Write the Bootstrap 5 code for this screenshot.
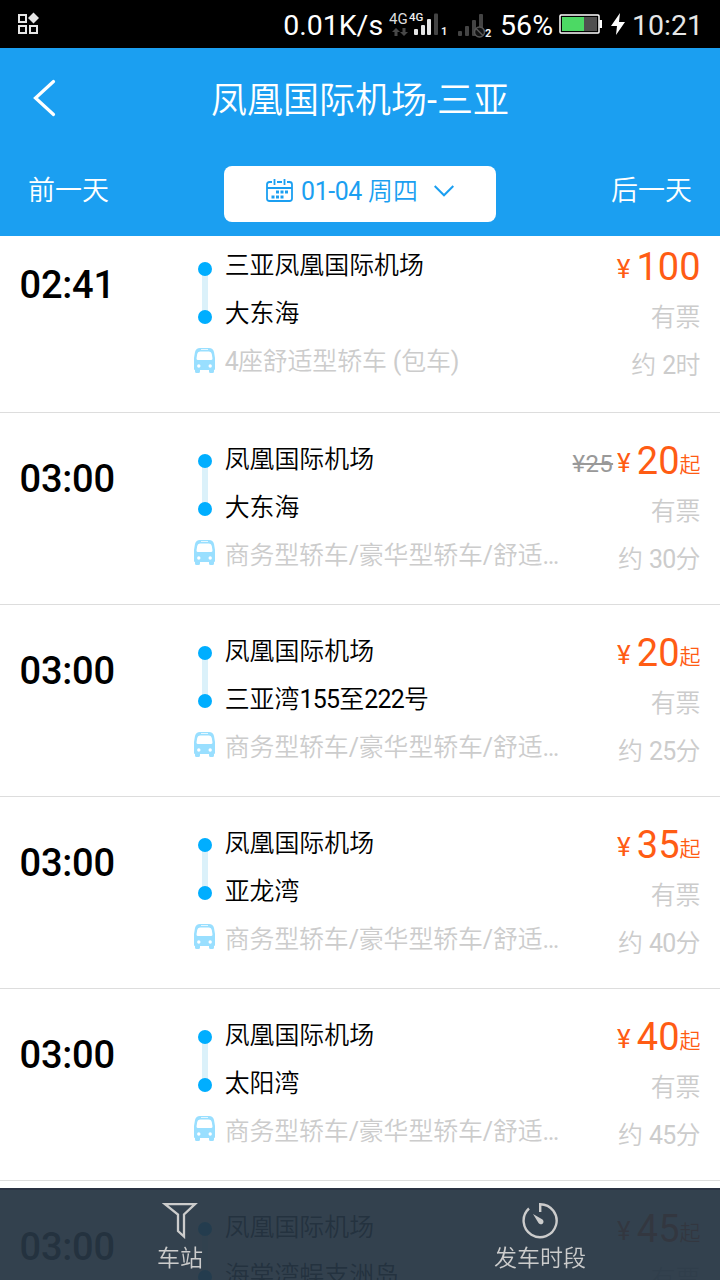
<!DOCTYPE html>
<html lang="zh-CN">
<head>
<meta charset="utf-8">
<meta name="viewport" content="width=device-width, initial-scale=1">
<title>凤凰国际机场-三亚</title>
<link rel="stylesheet" href="https://cdn.jsdelivr.net/npm/bootstrap@5.3.0/dist/css/bootstrap.min.css">
<style>
html,body{height:1280px;overflow:hidden}
body{font-family:Roboto,"Noto Sans CJK SC DemiLight","Noto Sans CJK SC",sans-serif;font-size:24.9px;color:#000;background:#fff}
svg{display:block;flex:none}
.statusbar{height:48px;background:#000;color:#fff;font-size:28.500px;line-height:48px;padding:3px 17px 0 17px}
.app-head{height:188px;background:#1b9ff1;color:#fff}
.title-line{height:100px;font-size:36px;padding-top:5px}
.back-btn{left:32px;top:31px}
.day-line{height:88px;padding:18px 28px 0}
.day-link{font-size:27px;line-height:48px;padding-top:1px}
.date-btn{width:272px;height:56px;border-radius:8px;background:#fff;color:#1b9ff1;padding:0 0 6px;border:0;gap:8px}
.date-btn>span{padding-top:2px}
.date-btn .digits{letter-spacing:-.4px}
.trip{height:192px;padding-top:22px;border-bottom:1px solid #ddd;line-height:48px}
.trip.first-trip{height:177px;padding-top:5px}
.depart{width:193px;padding-left:19.500px;font-size:38px;font-weight:500;line-height:48px;margin-top:20px;letter-spacing:-.2px}
.rail{width:24px;margin-top:18px}
.first-trip .rail{margin-top:20px}
.stops{width:345px;padding-left:7.700px;padding-top:1px;white-space:nowrap}
.stops>div{position:static;height:48px}
.digits{letter-spacing:-.7px}
.muted-text{color:#ccc}
.type-line{letter-spacing:-.1px}
.fare{padding-right:19.500px;margin-top:4px}
.fare-line{height:48.500px;color:#ff5c14;white-space:nowrap;line-height:44px}
.fare-line .cur{font-size:26px;margin-right:6px;vertical-align:2px}
.fare-line .num{font-size:38px}
.fare-line .from{font-size:21px;vertical-align:2px}
.fare-line .old{font-size:24px;color:#999;margin-right:4px;letter-spacing:.3px;vertical-align:2px}
.tools{height:92px;background:rgba(38,53,67,.94);border-top:2px solid #2b3343;color:#ccc;font-size:23px;line-height:34px}
.tools svg{margin-top:11px;margin-bottom:3px}
</style>
</head>
<body class="d-flex flex-column">
<svg width="0" height="0" class="position-absolute">
<defs>
<g id="rail">
<rect x="9" y="8" width="6" height="48" fill="#dbf1fa"/>
<circle cx="12" cy="8" r="7" fill="#00aeff"/><circle cx="12" cy="56" r="7" fill="#00aeff"/>
<g transform="translate(1 87)">
<path fill="#99dfff" fill-rule="evenodd" d="M6 0h9q4 0 5 4l1 6v11q0 1-1 1v1.500q0 1.500-1.500 1.500h-2q-1.500 0-1.500-1.500V22H6v1.500Q6 25 4.500 25h-2Q1 25 1 23.500V22q-1 0-1-1V10l1-6q1-4 5-4zM7 1.200v.8h7v-.8zM6 3.500Q3.600 3.500 3.200 6L2.500 10.500q0 1.500 1.500 1.500h13q1.500 0 1.500-1.500l-.7-4.500Q17.400 3.500 15 3.500zM4.800 16.300a1.700 1.700 0 1 0 0 3.400 1.700 1.700 0 0 0 0-3.400zm11.400 0a1.700 1.700 0 1 0 0 3.400 1.700 1.700 0 0 0 0-3.400z"/>
</g>
</g>
</defs>
</svg>

<div class="statusbar d-flex align-items-center flex-shrink-0">
<svg width="24" height="24" viewBox="0 0 24 24" style="margin-top:-3px" fill="none" stroke="#e6e6e6" stroke-width="2"><path d="M2 3h7v7H2zM2 14h7v7H2zM13 14h7v7h-7z"/><path fill="#e6e6e6" stroke="none" d="M16.500.5l5.500 5.500-5.500 5.500L11 6z"/></svg>
<span class="ms-auto">0.01K/s</span>
<svg width="111" height="46" viewBox="0 0 111 46" style="margin:-4px 0 0 6px" font-family="Roboto">
<text x="0" y="23" font-size="15" fill="#ddd">4G</text>
<path fill="#484848" d="M7 27l4 4H8.500v4h-3v-4H3zM15 35l-4-4h2.500v-4h3v4H19z"/>
<text x="20" y="20" font-size="11.500" font-weight="500" fill="#eee">4G</text>
<g fill="#e6e6e6"><rect x="25" y="28" width="4" height="6" rx="1"/><rect x="32" y="24" width="4" height="10" rx="1"/><rect x="38" y="18" width="4" height="16" rx="1"/></g>
<rect x="45" y="12.500" width="4" height="21.500" rx="1" fill="#444"/>
<text x="52" y="34" font-size="11" font-weight="700" fill="#eee">1</text>
<g fill="#444"><rect x="69" y="30" width="4" height="5" rx="1"/><rect x="76" y="25" width="4" height="10" rx="1"/><rect x="83" y="19" width="4" height="16" rx="1"/><rect x="90" y="13" width="4" height="22" rx="1"/></g>
<circle cx="90.500" cy="31" r="5" fill="#111" stroke="#555" stroke-width="1.500"/><path d="M87 27.500l7 7" stroke="#555" stroke-width="1.500"/>
<text x="96" y="36" font-size="11" font-weight="700" fill="#eee">2</text>
</svg>
<span>56%</span>
<svg width="43" height="20" viewBox="0 0 43 20" style="margin:-4px 0 0 6px"><rect x="1" y="1" width="39" height="18" rx="1" fill="none" stroke="#fff" stroke-width="1.500"/><rect x="3" y="3" width="22" height="14" fill="#4cd964"/><rect x="25" y="3" width="13" height="14" fill="#505050"/><rect x="40.500" y="6" width="2.500" height="8" fill="#fff"/></svg>
<svg width="15" height="22" viewBox="0 0 15 22" style="margin:-3px 6px 0 9px"><path fill="#fff" d="M9 0L0 13h6l-1 9L14 9H8z"/></svg>
<span style="color:#e6e6e6">10:21</span>
</div>

<header class="app-head flex-shrink-0">
<div class="title-line position-relative d-flex align-items-center justify-content-center">
<svg class="back-btn position-absolute" width="24" height="38" viewBox="0 0 24 38" fill="none" stroke="#fff" stroke-width="3.200" stroke-linecap="round"><path d="M21.500 2.500L3.500 19l18 16.500"/></svg>
<span>凤凰国际机场-三亚</span>
</div>
<div class="day-line d-flex justify-content-between">
<span class="day-link">前一天</span>
<button class="date-btn d-flex align-items-center justify-content-center">
<svg width="27" height="24" viewBox="0 0 27 24" fill="none" stroke="#1b9ff1" stroke-width="1.800"><path d="M6 3H3.500Q1 3 1 5.500v14Q1 22 3.500 22h20q2.500 0 2.500-2.500v-14Q26 3 23.500 3H21M11 3h5M1 9h25M8.500 0v6M18.500 0v6"/><path stroke-width="3" stroke-dasharray="3 1.500" d="M10 13h12M5.500 18h12"/></svg>
<span><span class="digits">01-04</span> 周四</span>
<svg width="20" height="12" viewBox="0 0 20 12" style="margin-left:8px" fill="none" stroke="#1b9ff1" stroke-width="2"><path d="M.7 1L10 10.300 19.300 1"/></svg>
</button>
<span class="day-link">后一天</span>
</div>
</header>

<main id="trips" class="flex-fill overflow-hidden" style="min-height:0"></main>

<nav class="tools fixed-bottom d-flex text-center">
<div class="col-6 d-flex flex-column align-items-center">
<svg width="36" height="38" viewBox="0 0 36 38" fill="none" stroke="#ccc" stroke-width="2.300"><path d="M3 3.200h30L22 13.500v22L16 30V13.500z"/></svg>
<span>车站</span>
</div>
<div class="col-6 d-flex flex-column align-items-center">
<svg width="36" height="38" viewBox="0 0 36 38" fill="none" stroke="#ccc" stroke-width="2.400"><path d="M18.200 11V3.200A16.500 16.500 0 1 1 7 7.500"/><path fill="#ccc" stroke="none" d="M11 13l9.500 5.500a2.700 2.700 0 1 1-4 3.500z"/></svg>
<span>发车时段</span>
</div>
</nav>

<script>
const longType='商务型轿车/豪华型轿车/舒适…';
const trips=[
['02:41','三亚凤凰国际机场','大东海','4座舒适型轿车 (包车)','','100','','约 2时'],
['03:00','凤凰国际机场','大东海',longType,'¥25','20','起','约 30分'],
['03:00','凤凰国际机场','三亚湾155至222号',longType,'','20','起','约 25分'],
['03:00','凤凰国际机场','亚龙湾',longType,'','35','起','约 40分'],
['03:00','凤凰国际机场','太阳湾',longType,'','40','起','约 45分'],
['03:00','凤凰国际机场','海棠湾蜈支洲岛',longType,'','45','起','']];
const tight=s=>s.replace(/\d+/g,'<span class="digits">$&</span>');
document.getElementById('trips').innerHTML=trips.map((t,i)=>`
<section class="trip d-flex align-items-start ${i?'':'first-trip'}">
<div class="depart flex-shrink-0">${t[0]}</div>
<svg class="rail" height="114" viewBox="0 0 24 114"><use href="#rail"/></svg>
<div class="stops flex-shrink-0"><div>${t[1]}</div><div>${tight(t[2])}</div>${i<5?`<div class="muted-text type-line">${tight(t[3])}</div>`:''}</div>
<div class="fare ms-auto text-end muted-text">
<div class="fare-line">${t[4]?`<span class="old text-decoration-line-through">${t[4]}</span>`:''}<span class="cur">¥</span><span class="num">${t[5]}</span><span class="from">${t[6]}</span></div>
<div>有票</div><div>${tight(t[7])}</div></div>
</section>`).join('');
</script>
<script src="https://cdn.jsdelivr.net/npm/bootstrap@5.3.0/dist/js/bootstrap.bundle.min.js"></script>
</body>
</html>
